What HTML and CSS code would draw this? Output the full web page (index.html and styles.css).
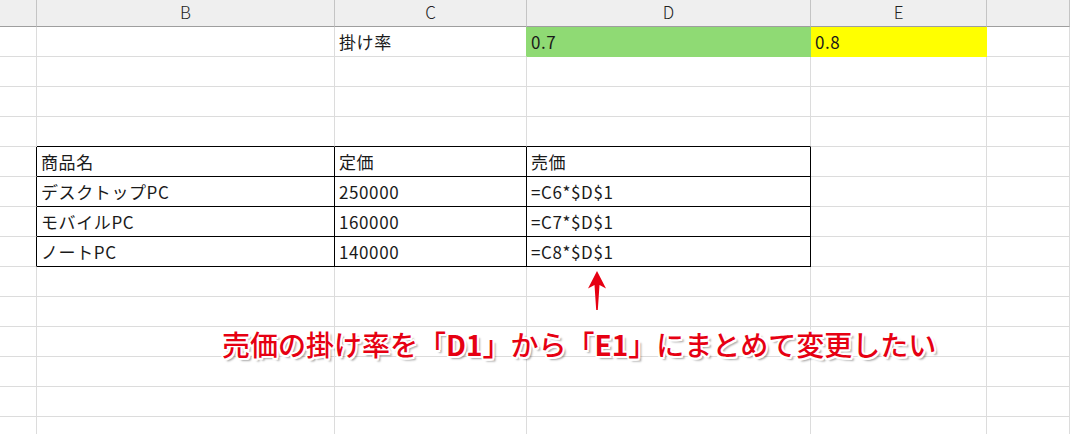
FILE: index.html
```html
<!DOCTYPE html>
<html lang="ja">
<head>
<meta charset="utf-8">
<link rel="stylesheet" href="styles.css">
</head>
<body>
<div class="sheet">
  <div class="row head">
    <div class="c"></div><div class="c">B</div><div class="c">C</div><div class="c">D</div><div class="c">E</div><div class="c"></div>
  </div>
  <div class="row">
    <div class="c"></div><div class="c"></div><div class="c green-edge">掛け率</div><div class="c fill-green">0.7</div><div class="c fill-yellow">0.8</div><div class="c"></div>
  </div>
  <div class="row"><div class="c"></div><div class="c"></div><div class="c"></div><div class="c"></div><div class="c"></div><div class="c"></div></div>
  <div class="row"><div class="c"></div><div class="c"></div><div class="c"></div><div class="c"></div><div class="c"></div><div class="c"></div></div>
  <div class="row"><div class="c"></div><div class="c tb"></div><div class="c tb"></div><div class="c tb"></div><div class="c"></div><div class="c"></div></div>
  <div class="row"><div class="c tl"></div><div class="c t">商品名</div><div class="c t">定価</div><div class="c t">売価</div><div class="c"></div><div class="c"></div></div>
  <div class="row"><div class="c tl"></div><div class="c t">デスクトップPC</div><div class="c t">250000</div><div class="c t">=C6*$D$1</div><div class="c"></div><div class="c"></div></div>
  <div class="row"><div class="c tl"></div><div class="c t">モバイルPC</div><div class="c t">160000</div><div class="c t">=C7*$D$1</div><div class="c"></div><div class="c"></div></div>
  <div class="row"><div class="c tl"></div><div class="c t">ノートPC</div><div class="c t">140000</div><div class="c t">=C8*$D$1</div><div class="c"></div><div class="c"></div></div>
  <div class="row"><div class="c"></div><div class="c"></div><div class="c"></div><div class="c"></div><div class="c"></div><div class="c"></div></div>
  <div class="row"><div class="c"></div><div class="c"></div><div class="c"></div><div class="c"></div><div class="c"></div><div class="c"></div></div>
  <div class="row"><div class="c"></div><div class="c"></div><div class="c"></div><div class="c"></div><div class="c"></div><div class="c"></div></div>
  <div class="row"><div class="c"></div><div class="c"></div><div class="c"></div><div class="c"></div><div class="c"></div><div class="c"></div></div>
  <div class="row"><div class="c"></div><div class="c"></div><div class="c"></div><div class="c"></div><div class="c"></div><div class="c"></div></div>
  <div class="row"><div class="c"></div><div class="c"></div><div class="c"></div><div class="c"></div><div class="c"></div><div class="c"></div></div>

  <svg class="arrow" width="18" height="40" viewBox="0 0 18 40">
    <path d="M9 0 L18 17.5 L11.5 14 L9.8 39 L8.2 39 L6.5 14 L0 17.5 Z" fill="#e60012"/>
  </svg>
  <div class="note">売価の掛け率を「<b>D1</b>」から「<b>E1</b>」にまとめて変更したい</div>
</div>
</body>
</html>
```
FILE: styles.css
```css
html, body {
  margin: 0;
  padding: 0;
  background: #ffffff;
}
body {
  width: 1070px;
  height: 434px;
  overflow: hidden;
  font-family: "Noto Sans CJK JP", "Noto Sans", sans-serif;
}
.sheet {
  position: relative;
  width: 1070px;
  height: 434px;
  overflow: hidden;
}
.row {
  display: grid;
  grid-template-columns: 37px 298px 192px 284px 176px 1fr;
  height: 30px;
}
.c {
  box-sizing: border-box;
  border-right: 1px solid #dcdcdc;
  border-bottom: 1px solid #dcdcdc;
  padding-left: 4px;
  font-size: 17px;
  line-height: 29px;
  letter-spacing: 0.6px;
  color: #1a1a1a;
  white-space: nowrap;
  overflow: hidden;
}
.head {
  height: 27px;
  background: #efefef;
}
.head .c {
  border-right-color: #c4c4c4;
  border-bottom-color: #9e9e9e;
  padding-left: 0;
  text-align: center;
  line-height: 24px;
  letter-spacing: 0;
  font-size: 17px;
  font-weight: 300;
  color: #222;
}
.fill-green {
  background: #8fda74;
  border-right-color: #8fda74;
  border-bottom-color: #8fda74;
}
.fill-yellow {
  background: #ffff00;
  border-right-color: #ffff00;
  border-bottom-color: #ffff00;
}
.green-edge {
  border-right-color: #8fda74;
}
.t {
  border-right-color: #000;
  border-bottom-color: #000;
}
.tb {
  border-bottom-color: #000;
}
.tl {
  border-right-color: #000;
}
.arrow {
  position: absolute;
  left: 588px;
  top: 271px;
}
.note {
  position: absolute;
  left: 222px;
  top: 324px;
  font-size: 28px;
  line-height: 40px;
  font-weight: 500;
  color: #e60012;
  white-space: nowrap;
  text-shadow:
    2px 0 0 #fff, -2px 0 0 #fff, 0 2px 0 #fff, 0 -2px 0 #fff,
    1.5px 1.5px 0 #fff, -1.5px 1.5px 0 #fff, 1.5px -1.5px 0 #fff, -1.5px -1.5px 0 #fff,
    3px 3px 2px rgba(0,0,0,0.35);
}
.note b {
  font-weight: 700;
}
```
